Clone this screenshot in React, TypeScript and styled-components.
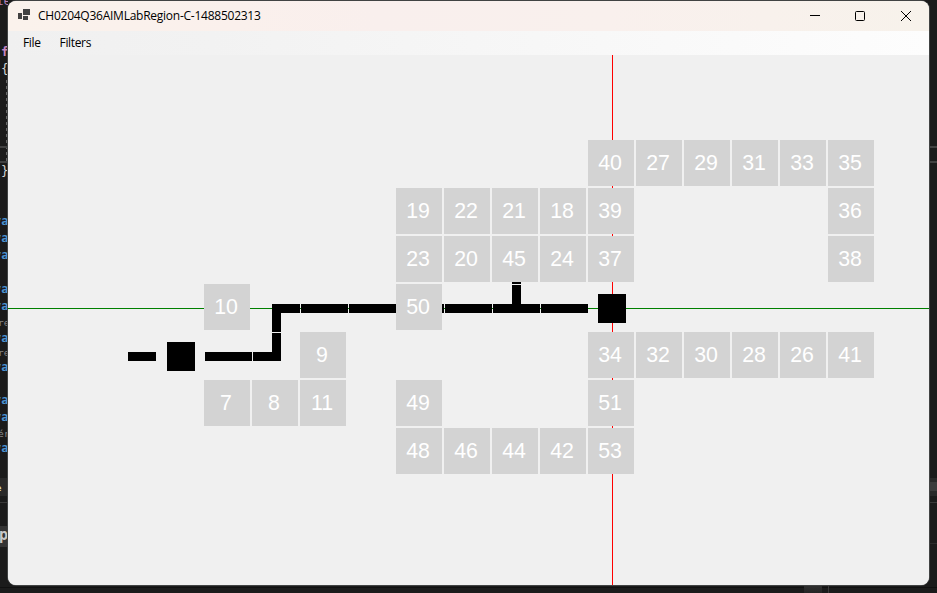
import React from "react";
import styled, { createGlobalStyle } from "styled-components";

const GlobalStyle = createGlobalStyle`
  * { box-sizing: border-box; }
  body { margin: 0; background: #1b1b1b; overflow: hidden; }
`;

/* The editor's rules and toolbars run the full width behind the window */
const Desktop = styled.div`
  display: grid;
  grid-template-columns: 8px 921px 8px;
  grid-template-rows: 593px;
  width: 937px;
  height: 593px;
  overflow: hidden;
  background:
    linear-gradient(#303030, #252525) 804px 585px / 18px 8px no-repeat,
    linear-gradient(#3a3a3a, #3a3a3a) 828px 585px / 1px 8px no-repeat,
    linear-gradient(#414141, #414141) 0 146px / 100% 2px no-repeat,
    linear-gradient(#414141, #414141) 0 161px / 100% 2px no-repeat,
    linear-gradient(#3c3c3c, #3c3c3c) 929px 482px / 8px 9px no-repeat,
    linear-gradient(#292929, #292929) 0 478px / 100% 18px no-repeat,
    linear-gradient(#393939, #393939) 0 502px / 100% 1px no-repeat,
    linear-gradient(#343434, #343434) 0 526px / 8px 21px no-repeat,
    linear-gradient(#2c2c2c, #2c2c2c) 0 543px / 100% 1px no-repeat,
    linear-gradient(#101010, #101010) 0 587px / 100% 1px no-repeat,
    repeating-linear-gradient(#696969 0 3px, transparent 3px 6px) 6px 80px / 1px 82px no-repeat,
    #1b1b1b;
`;

const CodeColumn = styled.div`
  display: flex;
  flex-direction: column;
  width: 8px;
  height: 593px;
  overflow: hidden;
  margin-top: -8px;
`;

const CodeLine = styled.div<{ $height: number; $color?: string; $size?: number; $indent?: number; $bold?: boolean }>`
  flex: none;
  height: ${(p) => p.$height}px;
  line-height: ${(p) => p.$height}px;
  text-indent: ${(p) => p.$indent ?? 0}px;
  white-space: pre;
  font-family: "DejaVu Sans Mono", monospace;
  font-size: ${(p) => p.$size ?? 12.5}px;
  font-weight: ${(p) => (p.$bold ? 700 : 400)};
  color: ${(p) => p.$color ?? "#d4d4d4"};
`;

const Window = styled.main`
  display: flex;
  flex-direction: column;
  width: 921px;
  height: 584px;
  margin-top: 1px;
  border-radius: 8px;
  overflow: hidden;
  background: #f0f0f0;
  box-shadow: 0 0 0 1px #414343;
`;

const TitleBar = styled.header`
  display: flex;
  align-items: center;
  flex: none;
  height: 30px;
  padding-left: 10px;
  background: linear-gradient(90deg, #faf2ec 0%, #faf0ec 25%, #f9efed 40%, #f9f0ed 65%, #f7f2eb 100%);
`;

const AppIcon = styled.svg`
  flex: none;
  width: 13px;
  height: 12px;
  margin: 0 7px 2px 0;
`;

const Title = styled.h1`
  flex: 1;
  margin: 0;
  font: 400 12px/30px "Open Sans", sans-serif;
  letter-spacing: -0.25px;
  color: #000;
  white-space: nowrap;
`;

const Caption = styled.button`
  display: grid;
  place-items: center;
  width: 46px;
  height: 30px;
  padding: 0;
  border: 0;
  background: none;
`;

const MenuBar = styled.nav`
  display: flex;
  align-items: center;
  gap: 19px;
  flex: none;
  height: 24px;
  padding: 0 15px;
  background: linear-gradient(90deg, #f0f0f0 0%, #f2f2f2 22%, #fdfdfd 100%);
`;

const MenuItem = styled.span`
  font: 400 12px/24px "Open Sans", sans-serif;
  letter-spacing: -0.35px;
  color: #000;
`;

const Canvas = styled.section`
  display: grid;
  grid-template: 530px / 921px;
  background: #f0f0f0;
`;

const Corridors = styled.svg`
  grid-area: 1 / 1;
  width: 921px;
  height: 530px;
`;

const RoomGrid = styled.div`
  grid-area: 1 / 1;
  display: grid;
  grid-template-columns: repeat(14, 46px);
  grid-template-rows: repeat(7, 46px);
  gap: 2px;
  padding: 85px 0 0 196px;
`;

const Room = styled.div<{ $col: number; $row: number }>`
  grid-column: ${(p) => p.$col};
  grid-row: ${(p) => p.$row};
  padding-right: 2px;
  background: #d3d3d3;
  color: #fff;
  font: 400 21.33px/46px "Liberation Sans", Arial, sans-serif;
  text-align: center;
`;

/* Rooms as [number, column, row] */
const rooms: [number, number, number][] = [
  [40, 9, 1], [27, 10, 1], [29, 11, 1], [31, 12, 1], [33, 13, 1], [35, 14, 1],
  [19, 5, 2], [22, 6, 2], [21, 7, 2], [18, 8, 2], [39, 9, 2], [36, 14, 2],
  [23, 5, 3], [20, 6, 3], [45, 7, 3], [24, 8, 3], [37, 9, 3], [38, 14, 3],
  [10, 1, 4], [50, 5, 4],
  [9, 3, 5], [34, 9, 5], [32, 10, 5], [30, 11, 5], [28, 12, 5], [26, 13, 5], [41, 14, 5],
  [7, 1, 6], [8, 2, 6], [11, 3, 6], [49, 5, 6], [51, 9, 6],
  [48, 5, 7], [46, 6, 7], [44, 7, 7], [42, 8, 7], [53, 9, 7],
];

/* Corridor pieces as [x, y, width, height] */
const corridors: [number, number, number, number][] = [
  [120, 297, 28, 9], [159, 287, 28, 29], [197, 297, 47, 9], [245, 297, 28, 9],
  [264, 278, 9, 28], [264, 249, 9, 28], [264, 249, 28, 9], [293, 249, 47, 9],
  [341, 249, 47, 9], [434, 249, 2, 9], [437, 249, 47, 9], [485, 249, 47, 9],
  [533, 249, 47, 9], [504, 227, 9, 2], [504, 230, 9, 19], [590, 239, 28, 29],
];

type Line = { h: number; text?: string; color?: string; size?: number; indent?: number; bold?: boolean };

const blank = (h: number): Line => ({ h });
const keyword = (h = 17): Line => ({ h, text: "va", color: "#4a92d0", size: 12, indent: -6, bold: true });
const lens = (h: number, text: string): Line => ({ h, text, color: "#8b8b8b", size: 9.5, indent: -2 });

const code: Line[] = [
  { h: 17, text: "ie", color: "#b47fb4", indent: -4 },
  blank(34),
  { h: 17, text: "f", color: "#c586c0", indent: 1, bold: true },
  { h: 17, text: "{", indent: 1 },
  blank(85),
  { h: 17, text: "}", indent: 1 },
  blank(34),
  keyword(), keyword(), keyword(), blank(17), keyword(), keyword(),
  lens(16, "re"), keyword(14), lens(15, "re"), keyword(15),
  blank(17), keyword(), keyword(),
  lens(15, "ér"), keyword(15),
  blank(24),
  { h: 17, text: "e c", color: "#d8d8b4", size: 9, indent: -4, bold: true },
  blank(29),
  { h: 18, text: "p", color: "#c8c8c8", size: 15, indent: -1, bold: true },
];

export default function App() {
  return (
    <>
      <GlobalStyle />
      <Desktop>
        <CodeColumn aria-hidden="true">
          {code.map((l, i) => (
            <CodeLine key={i} $height={l.h} $color={l.color} $size={l.size} $indent={l.indent} $bold={l.bold}>
              {l.text}
            </CodeLine>
          ))}
        </CodeColumn>
        <Window>
          <TitleBar>
            <AppIcon viewBox="0 0 13 12" shapeRendering="crispEdges">
              <path fill="#424242" d="M5 0h7v6H5zM0 4h4v6H0zM5 7h5v4H5z" />
            </AppIcon>
            <Title>CH0204Q36AIMLabRegion-C-1488502313</Title>
            <Caption aria-label="Minimize">
              <svg width="12" height="10"><path d="M2 4.5h10" stroke="#000" /></svg>
            </Caption>
            <Caption aria-label="Maximize">
              <svg width="10" height="10">
                <rect x=".5" y=".5" width="9" height="9" rx="1" fill="none" stroke="#000" />
              </svg>
            </Caption>
            <Caption aria-label="Close">
              <svg width="10" height="10"><path d="M0 0l10 10M10 0L0 10" stroke="#000" /></svg>
            </Caption>
          </TitleBar>
          <MenuBar>
            <MenuItem>File</MenuItem>
            <MenuItem>Filters</MenuItem>
          </MenuBar>
          <Canvas>
            <Corridors viewBox="0 0 921 530" shapeRendering="crispEdges">
              <rect x="604" y="0" width="1" height="530" fill="#f00" />
              <rect x="0" y="253" width="921" height="1" fill="#008000" />
              {corridors.map(([x, y, w, h], i) => (
                <rect key={i} x={x} y={y} width={w} height={h} />
              ))}
            </Corridors>
            <RoomGrid>
              {rooms.map(([id, col, row]) => (
                <Room key={id} $col={col} $row={row}>{id}</Room>
              ))}
            </RoomGrid>
          </Canvas>
        </Window>
      </Desktop>
    </>
  );
}
